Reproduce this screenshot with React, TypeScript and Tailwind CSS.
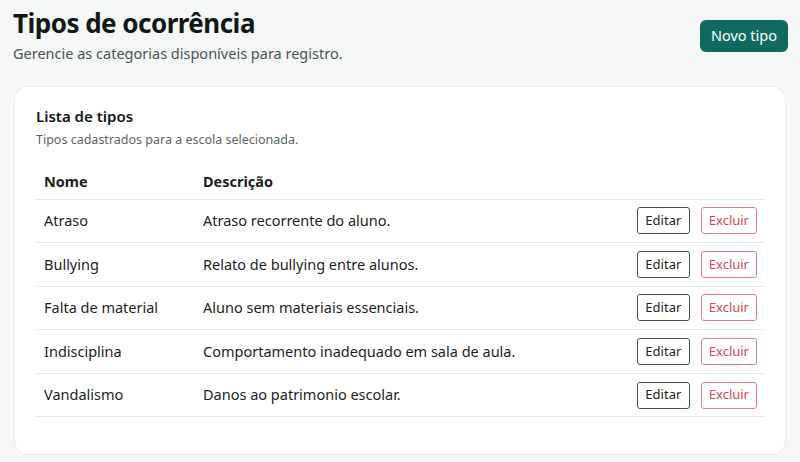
import React from "react";

const tipos = [
  { nome: "Atraso", descricao: "Atraso recorrente do aluno." },
  { nome: "Bullying", descricao: "Relato de bullying entre alunos." },
  { nome: "Falta de material", descricao: "Aluno sem materiais essenciais." },
  { nome: "Indisciplina", descricao: "Comportamento inadequado em sala de aula." },
  { nome: "Vandalismo", descricao: "Danos ao patrimonio escolar." },
];

export default function App() {
  return (
    <div
      className="min-h-screen bg-[#f4f7f6] px-[13px] pt-[4px] text-[#1a1f1e]"
      style={{ fontFamily: '"Noto Sans", sans-serif' }}
    >
      <div className="flex items-start justify-between">
        <div>
          <h1 className="text-[26px] font-bold leading-[38px] tracking-[-0.02em] text-[#111816]">Tipos de ocorrência</h1>
          <p className="text-[14.5px] leading-[22px] text-[#4b5552]">Gerencie as categorias disponíveis para registro.</p>
        </div>
        <button className="mt-[16px] mr-[-1px] h-[32px] rounded-[6px] bg-[#106b5f] px-[11px] text-[14.5px] text-white">
          Novo tipo
        </button>
      </div>

      <div className="mt-[22px] ml-[1px] mr-[1px] rounded-[14px] border border-[#e8eceb] bg-white px-[21px] pt-[18px] pb-[37px]">
        <h2 className="text-[15px] font-semibold leading-[22px] text-[#111816]">Lista de tipos</h2>
        <p className="mt-[4px] text-[12.5px] leading-[18px] text-[#5b6462]">Tipos cadastrados para a escola selecionada.</p>

        <table className="mt-[13px] w-full border-collapse text-[14.5px]">
          <thead>
            <tr className="border-b border-[#e3e7e6]">
              <th className="h-[37px] pt-[3px] pl-[8px] text-left font-bold w-[167px]">Nome</th>
              <th className="pt-[3px] text-left font-bold">Descrição</th>
              <th></th>
            </tr>
          </thead>
          <tbody>
            {tipos.map((t) => (
              <tr key={t.nome} className="border-b border-[#e3e7e6]">
                <td className="h-[43.6px] pl-[8px]">{t.nome}</td>
                <td>{t.descricao}</td>
                <td className="pr-[7px]">
                  <div className="flex justify-end gap-[11px]">
                    <button className="h-[27px] rounded-[3px] border border-[#4a4f4e] px-[7.5px] text-[13px] text-[#222]">
                      Editar
                    </button>
                    <button className="h-[27px] rounded-[3px] border border-[#e07f8c] px-[7px] text-[13px] text-[#d8465b]">
                      Excluir
                    </button>
                  </div>
                </td>
              </tr>
            ))}
          </tbody>
        </table>
      </div>
    </div>
  );
}
